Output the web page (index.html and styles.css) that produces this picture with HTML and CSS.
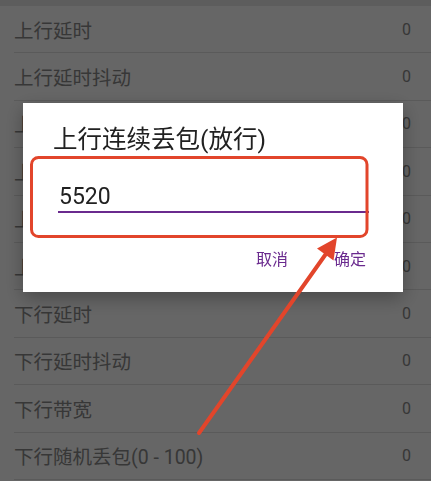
FILE: index.html
```html
<!DOCTYPE html>
<html lang="zh-CN">
<head>
  <meta charset="UTF-8">
  <meta name="viewport" content="width=device-width, initial-scale=1.0">
  <title>网络模拟设置</title>
  <link rel="stylesheet" href="styles.css">
</head>
<body>
  <div class="status-strip"></div>

  <ul class="settings">
    <li class="row"><span class="label">上行延时</span><span class="value">0</span></li>
    <li class="row"><span class="label">上行延时抖动</span><span class="value">0</span></li>
    <li class="row"><span class="label">上行带宽</span><span class="value">0</span></li>
    <li class="row"><span class="label">上行随机丢包(0 - 100)</span><span class="value">0</span></li>
    <li class="row"><span class="label">上行连续丢包(丢弃)</span><span class="value">0</span></li>
    <li class="row"><span class="label">上行连续丢包(放行)</span><span class="value">0</span></li>
    <li class="row"><span class="label">下行延时</span><span class="value">0</span></li>
    <li class="row"><span class="label">下行延时抖动</span><span class="value">0</span></li>
    <li class="row"><span class="label">下行带宽</span><span class="value">0</span></li>
    <li class="row"><span class="label">下行随机丢包(0 - 100)</span><span class="value">0</span></li>
  </ul>

  <div class="scrim">
    <div class="dialog">
      <h2 class="dialog-title">上行连续丢包(放行)</h2>
      <input class="dialog-input" type="text" value="5520">
      <div class="dialog-actions">
        <button class="text-btn">取消</button>
        <button class="text-btn">确定</button>
      </div>
    </div>
  </div>

  <!-- red markup drawn on top of the screenshot -->
  <svg class="markup" width="431" height="481" viewBox="0 0 431 481">
    <rect x="31.5" y="157.5" width="335.5" height="79" rx="7" ry="7" fill="none" stroke="#e2452b" stroke-width="3"/>
    <line x1="199" y1="433" x2="328" y2="251" stroke="#e2452b" stroke-width="4" stroke-linecap="round"/>
    <polygon points="337,237.5 317,248.5 333.5,260.5" fill="#e2452b"/>
  </svg>
</body>
</html>
```
FILE: styles.css
```css
body {
  margin: 0;
  padding: 0;
  background-color: #fff;
  font-family: Roboto, "Noto Sans CJK SC", sans-serif;
  height: 481px;
  overflow: hidden;
}

.status-strip {
  height: 6px;
  background-color: #e8e8e8;
}

.settings {
  list-style: none;
  margin: 0;
  padding: 0;
}

.row {
  display: flex;
  justify-content: space-between;
  align-items: center;
  box-sizing: border-box;
  height: 47.4px;
  margin-left: 14px;
  padding-right: 20px;
  border-bottom: 1px solid #e2e2e2;
  color: #8a8a8a;
}

.label {
  font-size: 19.5px;
}

.value {
  font-size: 16px;
}

.scrim {
  position: fixed;
  left: 0;
  top: 0;
  width: 100%;
  height: 100%;
  background-color: rgba(0, 0, 0, 0.6);
  box-sizing: border-box;
  padding: 103px 0 0 23px;
}

.dialog {
  width: 380px;
  box-sizing: border-box;
  background-color: #fff;
  padding: 21px 37px 22px 30px;
  box-shadow: 0 6px 18px rgba(0, 0, 0, 0.3);
}

.dialog-title {
  margin: 0;
  font-size: 24.5px;
  font-weight: normal;
  line-height: 32px;
  color: #212121;
}

.dialog-input {
  display: block;
  width: 310px;
  height: 28px;
  box-sizing: content-box;
  margin: 26px 0 0 5px;
  padding: 0 0 1px 1px;
  border: none;
  border-bottom: 2px solid #6a2a8e;
  outline: none;
  font-family: Roboto, sans-serif;
  font-size: 23px;
  color: #212121;
  background: transparent;
}

.dialog-actions {
  display: flex;
  justify-content: flex-end;
  gap: 46px;
  margin-top: 33px;
}

.text-btn {
  border: none;
  background: none;
  padding: 0;
  font-family: "Noto Sans CJK SC", sans-serif;
  font-size: 16px;
  line-height: 24px;
  color: #6a2a8e;
  cursor: pointer;
}

.markup {
  position: absolute;
  left: 0;
  top: 0;
  pointer-events: none;
}
```
